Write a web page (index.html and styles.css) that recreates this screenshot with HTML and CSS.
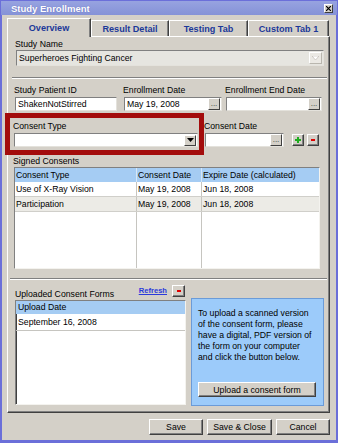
FILE: index.html
```html
<!DOCTYPE html>
<html lang="en">
  <head>
    <meta charset="UTF-8" />
    <meta name="viewport" content="width=device-width, initial-scale=1.0" />
    <title>Study Enrollment</title>
    <link rel="stylesheet" href="styles.css">
  </head>

  <body>
    <div class="window">
      <div class="titlebar">
        <span class="title">Study Enrollment</span>
        <span class="close-btn">
          <svg width="5" height="5" viewBox="0 0 5 5"><path d="M0 0L5 5M5 0L0 5" stroke="#000" stroke-width="1.2" /></svg>
        </span>
      </div>

      <div class="client">
        <div class="tabs">
          <div class="tab tab-overview active">Overview</div>
          <div class="tab tab-result">Result Detail</div>
          <div class="tab tab-testing">Testing Tab</div>
          <div class="tab tab-custom">Custom Tab 1</div>
        </div>

        <div class="panel">
          <label class="lbl">Study Name</label>
          <div class="combo combo-study disabled">
            <span class="combo-text">Superheroes Fighting Cancer</span>
            <span class="drop-btn">
              <svg width="7" height="5" viewBox="0 0 7 5"><path d="M0 0h7l-3.5 4z" fill="#fff" stroke="#b8b4ac" stroke-width="0.6" /></svg>
            </span>
          </div>

          <div class="groove groove-top"></div>

          <div class="field-row enroll-row">
            <div class="field f-patient">
              <label class="lbl">Study Patient ID</label>
              <div class="textbox">ShakenNotStirred</div>
            </div>
            <div class="field f-enroll">
              <label class="lbl">Enrollment Date</label>
              <div class="textbox date">
                <span>May 19, 2008</span>
                <span class="dots-btn">...</span>
              </div>
            </div>
            <div class="field f-end">
              <label class="lbl">Enrollment End Date</label>
              <div class="textbox date">
                <span></span>
                <span class="dots-btn">...</span>
              </div>
            </div>
          </div>

          <div class="field-row consent-row">
            <div class="field f-type">
              <label class="lbl">Consent Type</label>
              <div class="combo">
                <span class="combo-text"></span>
                <span class="drop-btn small">
                  <svg width="7" height="4" viewBox="0 0 7 4"><path d="M0 0h7l-3.5 4z" fill="#000" /></svg>
                </span>
              </div>
            </div>
            <div class="field f-cdate">
              <label class="lbl">Consent Date</label>
              <div class="textbox date">
                <span></span>
                <span class="dots-btn">...</span>
              </div>
            </div>
            <span class="tool-btn plus">
              <svg width="6" height="6" viewBox="0 0 6 6"><path d="M2 0h2v2h2v2h-2v2h-2v-2h-2v-2h2z" fill="#1fae1f" /></svg>
            </span>
            <span class="tool-btn minus"><span class="minus-bar"></span></span>
          </div>

          <label class="lbl lbl-signed">Signed Consents</label>
          <div class="grid-table">
            <div class="grid-row head">
              <span>Consent Type</span>
              <span>Consent Date</span>
              <span>Expire Date (calculated)</span>
            </div>
            <div class="grid-row">
              <span>Use of X-Ray Vision</span>
              <span>May 19, 2008</span>
              <span>Jun 18, 2008</span>
            </div>
            <div class="grid-row alt">
              <span>Participation</span>
              <span>May 19, 2008</span>
              <span>Jun 18, 2008</span>
            </div>
            <div class="grid-row filler">
              <span></span>
              <span></span>
              <span></span>
            </div>
          </div>

          <div class="groove groove-mid"></div>

          <div class="upload-section">
            <div class="upload-col">
              <div class="upload-head">
                <label class="lbl">Uploaded Consent Forms</label>
                <a class="refresh" href="#">Refresh</a>
                <span class="tool-btn minus wide"><span class="minus-bar"></span></span>
              </div>
              <div class="upload-list">
                <div class="list-head">Upload Date</div>
                <div class="list-item">September 16, 2008</div>
              </div>
            </div>
            <div class="info-box">
              <p>To upload a scanned version<br>of the consent form, please<br>have a digital, PDF version of<br>the form on your computer<br>and click the button below.</p>
              <button class="btn upload-btn">Upload a consent form</button>
            </div>
          </div>
        </div>

        <div class="footer">
          <button class="btn btn-save">Save</button>
          <button class="btn btn-close">Save &amp; Close</button>
          <button class="btn btn-cancel">Cancel</button>
        </div>
      </div>

      <div class="highlight"></div>
    </div>
  </body>
</html>
```

FILE: styles.css
```css
* {
  box-sizing: border-box;
}

body {
  margin: 0;
  font-family: "Liberation Sans", Arial, sans-serif;
  font-size: 8.7px;
  color: #000;
  background: #d4d0c8;
}

.window {
  position: relative;
  width: 338px;
  height: 443px;
  display: flex;
  flex-direction: column;
}

.titlebar {
  height: 15px;
  display: flex;
  align-items: center;
  justify-content: space-between;
  padding: 0 4px 0 10px;
  background: linear-gradient(#97a3e0, #8592d7);
  border: 1px solid #6b6fd9;
  border-bottom: none;
}

.title {
  color: #fff;
  font-weight: bold;
  font-size: 9.5px;
  text-shadow: 0 0 1px #5b64b4;
}

.close-btn {
  width: 9px;
  height: 9px;
  display: flex;
  align-items: center;
  justify-content: center;
  background: #d4d0c8;
  border: 1px solid;
  border-color: #fff #404040 #404040 #fff;
}

.client {
  flex: 1;
  display: flex;
  flex-direction: column;
  background: #d4d0c8;
  border: 2px solid #6b6fd9;
  border-top: none;
  border-bottom-width: 3px;
  padding: 3px 6px 5px 5px;
}

/* tabs */
.tabs {
  display: flex;
  align-items: flex-end;
  height: 18px;
}

.tab {
  height: 16px;
  display: flex;
  align-items: center;
  justify-content: center;
  font-weight: bold;
  font-size: 9.1px;
  color: #1b3899;
  background: #d4d0c8;
  border-top: 1px solid #fff;
  border-left: 1px solid #fff;
  border-right: 1px solid #404040;
  box-shadow: inset -1px 0 #808080;
}

.tab.active {
  height: 19px;
  margin-bottom: -1px;
  position: relative;
  z-index: 1;
}

.tab-overview { width: 84px; }
.tab-result { width: 78px; }
.tab-testing { width: 79px; }
.tab-custom { width: 81px; }

.panel {
  height: 377px;
  border: 1px solid;
  border-color: #fff #404040 #404040 #fff;
  box-shadow: inset -1px -1px #808080;
  padding: 2px 5px 0 7px;
}

.lbl {
  display: block;
  height: 11px;
  line-height: 11px;
  white-space: nowrap;
}

/* inputs */
.combo,
.textbox {
  display: flex;
  align-items: center;
  justify-content: space-between;
  height: 14px;
  background: #fff;
  border: 1px solid;
  border-color: #808080 #e4e2dc #e4e2dc #808080;
  padding: 0 1px 0 2px;
  white-space: nowrap;
}

.combo-study {
  height: 16px;
  margin-left: 1px;
}

.combo.disabled {
  background: #e6e5e0;
}

.drop-btn {
  width: 13px;
  height: 12px;
  display: flex;
  align-items: center;
  justify-content: center;
  background: #d4d0c8;
  border: 1px solid;
  border-color: #fff #404040 #404040 #fff;
}

.disabled .drop-btn {
  background: #ebe9e4;
  border-color: #fff #b9b6ae #b9b6ae #fff;
}

.drop-btn.small {
  width: 12px;
  height: 11px;
}

.dots-btn {
  width: 12px;
  height: 12px;
  display: flex;
  justify-content: center;
  line-height: 10px;
  font-size: 8px;
  color: #333;
  background: #d4d0c8;
  border: 1px solid;
  border-color: #fff #404040 #404040 #fff;
}

.groove {
  height: 2px;
  border-top: 1px solid #808080;
  border-bottom: 1px solid #fff;
}

.groove-top {
  margin: 11px -3px 0 -3px;
}

.groove-mid {
  margin: 9px -3px 0 -5px;
}

.field-row {
  display: flex;
  align-items: flex-end;
}

.field .lbl {
  margin-left: -1px;
  margin-bottom: 1px;
}

.enroll-row {
  margin-top: 6px;
}

.f-patient { width: 102px; }
.f-enroll { width: 98px; margin-left: 7px; }
.f-end { width: 96px; margin-left: 4px; }

.consent-row {
  margin-top: 10px;
}

.f-type { width: 184px; margin-left: -1px; }
.f-cdate { width: 79px; margin-left: 7px; }

.tool-btn {
  width: 12px;
  height: 12px;
  display: flex;
  align-items: center;
  justify-content: center;
  background: #d4d0c8;
  border: 1px solid;
  border-color: #fff #404040 #404040 #fff;
  box-shadow: inset -1px -1px #808080;
}

.consent-row .tool-btn {
  margin-bottom: 1px;
}

.plus { margin-left: 8px; }
.consent-row .minus { margin-left: 3px; }

.minus-bar {
  width: 4px;
  height: 2px;
  background: #e00000;
}

/* signed consents grid */
.lbl-signed {
  margin: 9px 0 0 -2px;
}

.grid-table {
  width: 306px;
  height: 102px;
  margin-left: -1px;
  display: flex;
  flex-direction: column;
  background: #fff;
  border: 1px solid;
  border-color: #808080 #f4f3ef #f4f3ef #808080;
}

.grid-row {
  display: grid;
  grid-template-columns: 122px 65px 117px;
  height: 15px;
  border-bottom: 1px solid #d0cfca;
}

.grid-row span {
  padding-left: 1px;
  line-height: 14px;
  border-right: 1px solid #c6c5c0;
  white-space: nowrap;
}

.grid-row span:last-child {
  border-right: none;
}

.grid-row.head {
  height: 14px;
  background: #a5ccf3;
  border-bottom: none;
}

.grid-row.head span {
  line-height: 14px;
  border-right-color: #d6e7f8;
}

.grid-row.alt {
  background: #ecebe6;
}

.grid-row.filler {
  flex: 1;
  border-bottom: none;
}

/* uploaded forms */
.upload-section {
  display: flex;
  gap: 5px;
}

.upload-col {
  width: 171px;
}

.upload-head {
  display: flex;
  align-items: flex-start;
  height: 20px;
  padding-top: 5px;
}

.upload-head .lbl {
  margin-top: 4px;
}

.refresh {
  margin-left: auto;
  line-height: 11px;
  font-size: 7.6px;
  font-weight: bold;
  color: #2b3bdb;
}

.minus.wide {
  width: 13px;
  margin: 0 1px 0 5px;
}

.upload-list {
  height: 105px;
  background: #fff;
  border: 1px solid;
  border-color: #808080 #f4f3ef #f4f3ef #808080;
  box-shadow: inset 1px 0 #404040;
}

.list-head {
  height: 13px;
  line-height: 13px;
  padding-left: 2px;
  background: #a5ccf3;
}

.list-item {
  height: 17px;
  line-height: 16px;
  padding-left: 2px;
  border-bottom: 1px solid #c6c5c0;
}

.info-box {
  width: 133px;
  height: 108px;
  margin-top: 18px;
  display: flex;
  flex-direction: column;
  background: #9ccbfa;
  border: 1px solid #6b9bd8;
  padding: 9px 0 8px 6px;
}

.info-box p {
  margin: 0;
  line-height: 11px;
}

/* buttons */
.btn {
  height: 16px;
  padding: 0;
  font-family: inherit;
  font-size: 8.7px;
  color: #000;
  background: #d4d0c8;
  border: 1px solid;
  border-color: #fff #404040 #404040 #fff;
  box-shadow: inset -1px -1px #808080;
}

.upload-btn {
  width: 118px;
  height: 15px;
  margin-top: auto;
}

.footer {
  display: flex;
  justify-content: flex-end;
  gap: 4px;
  margin-top: 6px;
}

.btn-save,
.btn-cancel {
  width: 54px;
}

.btn-close {
  width: 65px;
}

/* red annotation box drawn over the form */
.highlight {
  position: absolute;
  left: 5px;
  top: 113px;
  width: 199px;
  height: 42px;
  border: 5px solid #a30c0c;
}
```
